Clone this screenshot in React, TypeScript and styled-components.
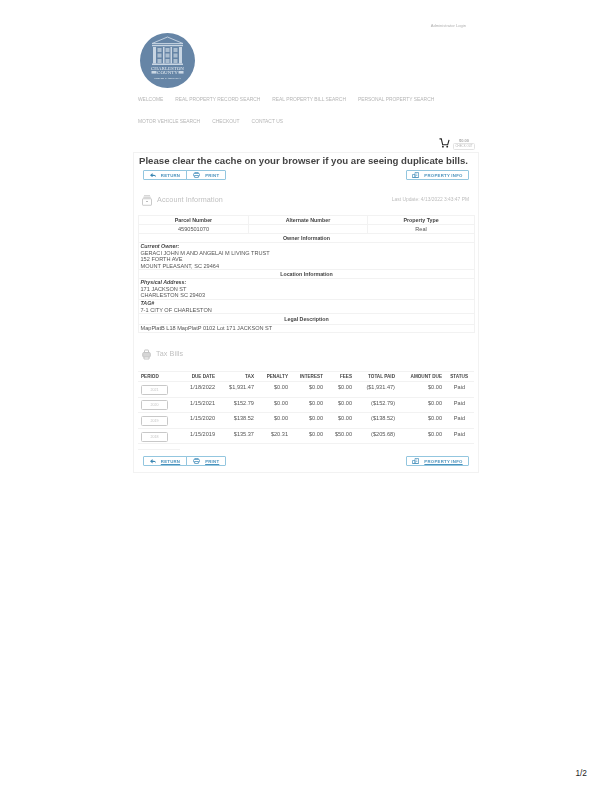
import React from "react";
import styled, { createGlobalStyle } from "styled-components";

const Global = createGlobalStyle`
  html, body { margin: 0; padding: 0; background: #fff; }
  body { font-family: "Liberation Sans", Arial, sans-serif; color: #555; }
  * { box-sizing: border-box; }
`;

const Page = styled.div`
  width: 612px;
  height: 792px;
  display: flex;
  flex-direction: column;
  overflow: hidden;
`;
const Sheet = styled.div`
  width: 346px;
  margin-left: 133px;
  filter: blur(0.3px);
`;
const AdminRow = styled.div`
  height: 33px;
  padding: 23px 13px 0 0;
  text-align: right;
  font-size: 4.1px;
  line-height: 6px;
  color: #b0b0b0;
`;
const LogoWrap = styled.div`
  padding-left: 7px;
  height: 55px;
`;
const Nav = styled.nav`
  display: flex;
  flex-wrap: wrap;
  padding: 1px 0 0 5px;
  width: 315px;
`;
const NavItem = styled.span`
  font-size: 4.9px;
  line-height: 22px;
  height: 22px;
  color: #b5b5b5;
  margin-right: 12px;
  white-space: nowrap;
`;
const CartRow = styled.div`
  height: 19px;
  display: flex;
  justify-content: flex-end;
  align-items: flex-start;
  padding: 5px 4px 0 0;
  gap: 3px;
`;
const CartCol = styled.div`
  display: flex;
  flex-direction: column;
  align-items: center;
  width: 22px;
`;
const CartPrice = styled.div`
  font-size: 4px;
  line-height: 5px;
  font-weight: bold;
  color: #aaa;
`;
const CheckOut = styled.div`
  width: 22px;
  height: 6.5px;
  border: 0.6px solid #e2e2e2;
  border-radius: 1.5px;
  font-size: 2.9px;
  line-height: 5.4px;
  text-align: center;
  color: #b5b5b5;
`;
const Panel = styled.div`
  height: 321px;
  border: 1px solid #f2f2f2;
  padding: 0 4px;
`;
const Title = styled.h1`
  margin: 0;
  padding: 2px 0 0 1px;
  height: 17px;
  font-size: 9.63px;
  line-height: 12px;
  font-weight: bold;
  color: #444;
  white-space: nowrap;
`;
const ButtonBar = styled.div`
  display: flex;
  justify-content: space-between;
  padding: 0 5px;
  height: 11px;
`;
const ButtonGroup = styled.div`
  display: flex;
`;
const Btn = styled.div<{ $w: number; $first?: boolean; $last?: boolean; $ul?: boolean }>`
  width: ${(p) => p.$w}px;
  height: 10px;
  border: 0.8px solid #93c6df;
  margin-left: ${(p) => (p.$first ? 0 : -0.8)}px;
  border-radius: ${(p) => (p.$first && p.$last ? "1px" : p.$first ? "1px 0 0 1px" : "0 1px 1px 0")};
  display: flex;
  align-items: center;
  justify-content: center;
  gap: 5px;
  font-size: 4.3px;
  font-weight: bold;
  letter-spacing: 0.25px;
  color: #4a92bd;
  text-decoration: ${(p) => (p.$ul ? "underline" : "none")};
`;
const SectionHead = styled.div<{ $h: number; $pad: number }>`
  height: ${(p) => p.$h}px;
  padding: ${(p) => p.$pad}px 0 0 4px;
  display: flex;
  align-items: flex-start;
  justify-content: space-between;
`;
const SectionTitle = styled.div`
  display: flex;
  align-items: center;
  gap: 5px;
  font-size: 7.2px;
  line-height: 12px;
  color: #c0c0c0;
  letter-spacing: 0.1px;
`;
const Updated = styled.div`
  font-size: 4.9px;
  line-height: 12px;
  color: #bcbcbc;
  padding-right: 5px;
`;
const InfoTable = styled.table`
  width: 336px;
  border-collapse: collapse;
  table-layout: fixed;
  font-size: 5.6px;
  line-height: 6.5px;
  color: #555;
  td, th { border: 0.8px solid #f2f2f2; padding: 0; }
`;
const HeadCell = styled.th<{ $h?: number }>`
  height: ${(p) => p.$h ?? 9}px;
  font-size: 5.3px;
  font-weight: bold;
  text-align: center;
  color: #444;
`;
const ValCell = styled.td`
  height: 9px;
  text-align: center;
`;
const BlockCell = styled.td<{ $h: number }>`
  height: ${(p) => p.$h}px;
  padding: 0 0 0 1.5px !important;
  vertical-align: middle;
`;
const Em = styled.b`
  font-style: italic;
  font-size: 5.3px;
  display: block;
  color: #444;
`;
const BillTable = styled.table`
  width: 336px;
  border-collapse: collapse;
  table-layout: fixed;
  font-size: 5.6px;
  color: #555;
`;
const BillHead = styled.th<{ $left?: boolean; $pr?: number }>`
  height: 10px;
  font-size: 4.65px;
  font-weight: bold;
  text-align: ${(p) => (p.$left ? "left" : "right")};
  padding: 0 ${(p) => p.$pr ?? 0}px 0 ${(p) => (p.$left ? 3 : 0)}px;
  border-top: 0.8px solid #f2f2f2;
  border-bottom: 0.8px solid #f2f2f2;
  color: #444;
`;
const BillCell = styled.td<{ $pr?: number }>`
  height: 15.6px;
  text-align: right;
  padding: 0 ${(p) => p.$pr ?? 0}px 4px 0;
  border-bottom: 1px solid #f2f2f2;
`;
const PeriodCell = styled.td`
  border-bottom: 1px solid #f2f2f2;
  padding: 1px 0 0 3px;
`;
const PeriodBtn = styled.div`
  width: 27px;
  height: 10px;
  border: 0.8px solid #c8c8c8;
  border-radius: 1.5px;
  font-size: 3.6px;
  line-height: 8.4px;
  text-align: center;
  color: #c4c4c4;
`;
const StubLine = styled.div`
  width: 42px;
  height: 1px;
  margin-top: 5px;
  background: #f2f2f2;
`;
const BottomBar = styled(ButtonBar)`
  margin-top: 6px;
`;
const PageNo = styled.div`
  margin-top: auto;
  padding: 0 25px 14px 0;
  text-align: right;
  font-size: 8.3px;
  line-height: 10px;
  color: #222;
`;

const ReplyIcon = () => (
  <svg width="6" height="4.5" viewBox="0 0 14 10"><path d="M6 0 0 5l6 5V7h4c2 0 3 1 4 3 0-4-2-6-5-6H6z" fill="#3b87b3" /></svg>
);
const PrintIcon = () => (
  <svg width="7" height="6" viewBox="0 0 14 12" fill="none" stroke="#4a92bd" strokeWidth="1.5">
    <path d="M3.5 3V1h7v2" /><rect x="1" y="3" width="12" height="5.5" rx="1.5" /><rect x="3.5" y="7" width="7" height="4" fill="#fff" />
  </svg>
);
const InfoIcon = () => (
  <svg width="7" height="6" viewBox="0 0 14 12" fill="none" stroke="#4a92bd" strokeWidth="1.4">
    <path d="M1 11V5h5v6zM6 11V1h7v10zM1 11h12M8.5 4h2M8.5 7h2" />
  </svg>
);
const ArchiveIcon = () => (
  <svg width="10" height="11" viewBox="0 0 20 22" fill="none" stroke="#bdbdbd" strokeWidth="1.6">
    <path d="M4 1.5h12M2.5 4.5h15" />
    <rect x="1" y="7.5" width="18" height="13" rx="1" />
    <path d="M8 13h4" strokeWidth="2" />
  </svg>
);
const BillIcon = () => (
  <svg width="9" height="11" viewBox="0 0 18 22" fill="none" stroke="#c4c4c4" strokeWidth="2">
    <path d="M5 7V3a1 1 0 0 1 1-1h6a1 1 0 0 1 1 1v4" />
    <rect x="1.5" y="7" width="15" height="9" rx="2" fill="#d6d6d6" />
    <path d="M4 16v4h10v-4" />
  </svg>
);
const CartIcon = () => (
  <svg width="11" height="10" viewBox="0 0 24 22" fill="none" stroke="#222" strokeWidth="2.4">
    <path d="M1 2h4l3 13h11l3-11" />
    <circle cx="8.5" cy="19" r="2" fill="#222" stroke="none" />
    <circle cx="18" cy="19" r="2" fill="#222" stroke="none" />
  </svg>
);
const Logo = () => (
  <svg width="55" height="55" viewBox="0 0 55 55">
    <circle cx="27.5" cy="27.5" r="27.5" fill="#6685a6" />
    <g fill="none" stroke="#c9d6e3" strokeWidth="0.9">
      <path d="M12 10.5 27.5 4 43 10.5z" />
      <path d="M12 12.5h31" strokeWidth="1.4" />
    </g>
    <g fill="#c9d6e3">
      <rect x="13" y="14" width="3" height="16.5" />
      <rect x="39" y="14" width="3" height="16.5" />
      <rect x="23" y="14" width="1.5" height="16.5" />
      <rect x="30.5" y="14" width="1.5" height="16.5" />
      <rect x="17.5" y="15" width="4" height="4" opacity="0.7" />
      <rect x="25.5" y="15" width="4" height="4" opacity="0.7" />
      <rect x="33.5" y="15" width="4" height="4" opacity="0.7" />
      <rect x="17.5" y="20.5" width="4" height="4" opacity="0.7" />
      <rect x="25.5" y="20.5" width="4" height="4" opacity="0.7" />
      <rect x="33.5" y="20.5" width="4" height="4" opacity="0.7" />
      <rect x="17.5" y="26" width="4" height="4" opacity="0.7" />
      <rect x="25.5" y="26" width="4" height="4" opacity="0.7" />
      <rect x="33.5" y="26" width="4" height="4" opacity="0.7" />
      <rect x="12" y="30.5" width="31" height="1.5" />
      <rect x="11.5" y="38" width="5" height="2.6" />
      <rect x="38.5" y="38" width="5" height="2.6" />
    </g>
    <g fontFamily="Liberation Serif, serif" fill="#e6edf3" textAnchor="middle">
      <text x="27.5" y="36.8" fontSize="5">CHARLESTON</text>
      <text x="27.5" y="41.4" fontSize="5">COUNTY</text>
      <text x="27.5" y="45.6" fontSize="2.9" fontWeight="bold">SOUTH CAROLINA</text>
    </g>
  </svg>
);

const Buttons = ({ ul }: { ul?: boolean }) => (
  <>
    <ButtonGroup>
      <Btn $w={44} $first $ul={ul}><ReplyIcon />RETURN</Btn>
      <Btn $w={40} $last $ul={ul}><PrintIcon />PRINT</Btn>
    </ButtonGroup>
    <Btn $w={63} $first $last $ul={ul}><InfoIcon />PROPERTY INFO</Btn>
  </>
);

const bills = [
  ["2021", "1/18/2022", "$1,931.47", "$0.00", "$0.00", "$0.00", "($1,931.47)", "$0.00", "Paid"],
  ["2020", "1/15/2021", "$152.79", "$0.00", "$0.00", "$0.00", "($152.79)", "$0.00", "Paid"],
  ["2019", "1/15/2020", "$138.52", "$0.00", "$0.00", "$0.00", "($138.52)", "$0.00", "Paid"],
  ["2018", "1/15/2019", "$135.37", "$20.31", "$0.00", "$50.00", "($205.68)", "$0.00", "Paid"],
];
const colWidths = [42, 35, 39, 34, 35, 29, 43, 47, 32];
const heads = ["DUE DATE", "TAX", "PENALTY", "INTEREST", "FEES", "TOTAL PAID", "AMOUNT DUE"];

export default function App() {
  return (
    <Page>
      <Global />
      <Sheet>
        <AdminRow>Administrator Login</AdminRow>
        <LogoWrap><Logo /></LogoWrap>
        <Nav>
          {["WELCOME", "REAL PROPERTY RECORD SEARCH", "REAL PROPERTY BILL SEARCH", "PERSONAL PROPERTY SEARCH", "MOTOR VEHICLE SEARCH", "CHECKOUT", "CONTACT US"].map((n) => (
            <NavItem key={n}>{n}</NavItem>
          ))}
        </Nav>
        <CartRow>
          <CartIcon />
          <CartCol>
            <CartPrice>$0.00</CartPrice>
            <CheckOut>CHECK OUT</CheckOut>
          </CartCol>
        </CartRow>
        <Panel>
          <Title>Please clear the cache on your browser if you are seeing duplicate bills.</Title>
          <ButtonBar><Buttons /></ButtonBar>
          <SectionHead $h={34} $pad={13}>
            <SectionTitle><ArchiveIcon />Account Information</SectionTitle>
            <Updated>Last Update: 4/13/2022 3:43:47 PM</Updated>
          </SectionHead>
          <InfoTable>
            <colgroup><col style={{ width: 110 }} /><col style={{ width: 119 }} /><col style={{ width: 107 }} /></colgroup>
            <tbody>
              <tr><HeadCell>Parcel Number</HeadCell><HeadCell>Alternate Number</HeadCell><HeadCell>Property Type</HeadCell></tr>
              <tr><ValCell>4590501070</ValCell><ValCell /><ValCell>Real</ValCell></tr>
              <tr><HeadCell colSpan={3}>Owner Information</HeadCell></tr>
              <tr><BlockCell colSpan={3} $h={27}><Em>Current Owner:</Em>GERACI JOHN M AND ANGELAI M LIVING TRUST<br />152 FORTH AVE<br />MOUNT PLEASANT, SC 29464</BlockCell></tr>
              <tr><HeadCell colSpan={3}>Location Information</HeadCell></tr>
              <tr><BlockCell colSpan={3} $h={21}><Em>Physical Address:</Em>171 JACKSON ST<br />CHARLESTON SC 29403</BlockCell></tr>
              <tr><BlockCell colSpan={3} $h={14}><Em>TAG#</Em>7-1 CITY OF CHARLESTON</BlockCell></tr>
              <tr><HeadCell colSpan={3} $h={11}>Legal Description</HeadCell></tr>
              <tr><BlockCell colSpan={3} $h={8}>MapPlatB L18 MapPlatP 0102 Lot 171 JACKSON ST</BlockCell></tr>
            </tbody>
          </InfoTable>
          <SectionHead $h={38} $pad={15}>
            <SectionTitle><BillIcon />Tax Bills</SectionTitle>
          </SectionHead>
          <BillTable>
            <colgroup>{colWidths.map((w, i) => <col key={i} style={{ width: w }} />)}</colgroup>
            <thead>
              <tr>
                <BillHead $left>PERIOD</BillHead>
                {heads.map((h) => <BillHead key={h}>{h}</BillHead>)}
                <BillHead $pr={6}>STATUS</BillHead>
              </tr>
            </thead>
            <tbody>
              {bills.map((b) => (
                <tr key={b[0]}>
                  <PeriodCell><PeriodBtn>{b[0]}</PeriodBtn></PeriodCell>
                  {b.slice(1).map((v, i) => <BillCell key={i} $pr={i === 7 ? 9 : 0}>{v}</BillCell>)}
                </tr>
              ))}
            </tbody>
          </BillTable>
          <StubLine />
          <BottomBar><Buttons ul /></BottomBar>
        </Panel>
      </Sheet>
      <PageNo>1/2</PageNo>
    </Page>
  );
}
